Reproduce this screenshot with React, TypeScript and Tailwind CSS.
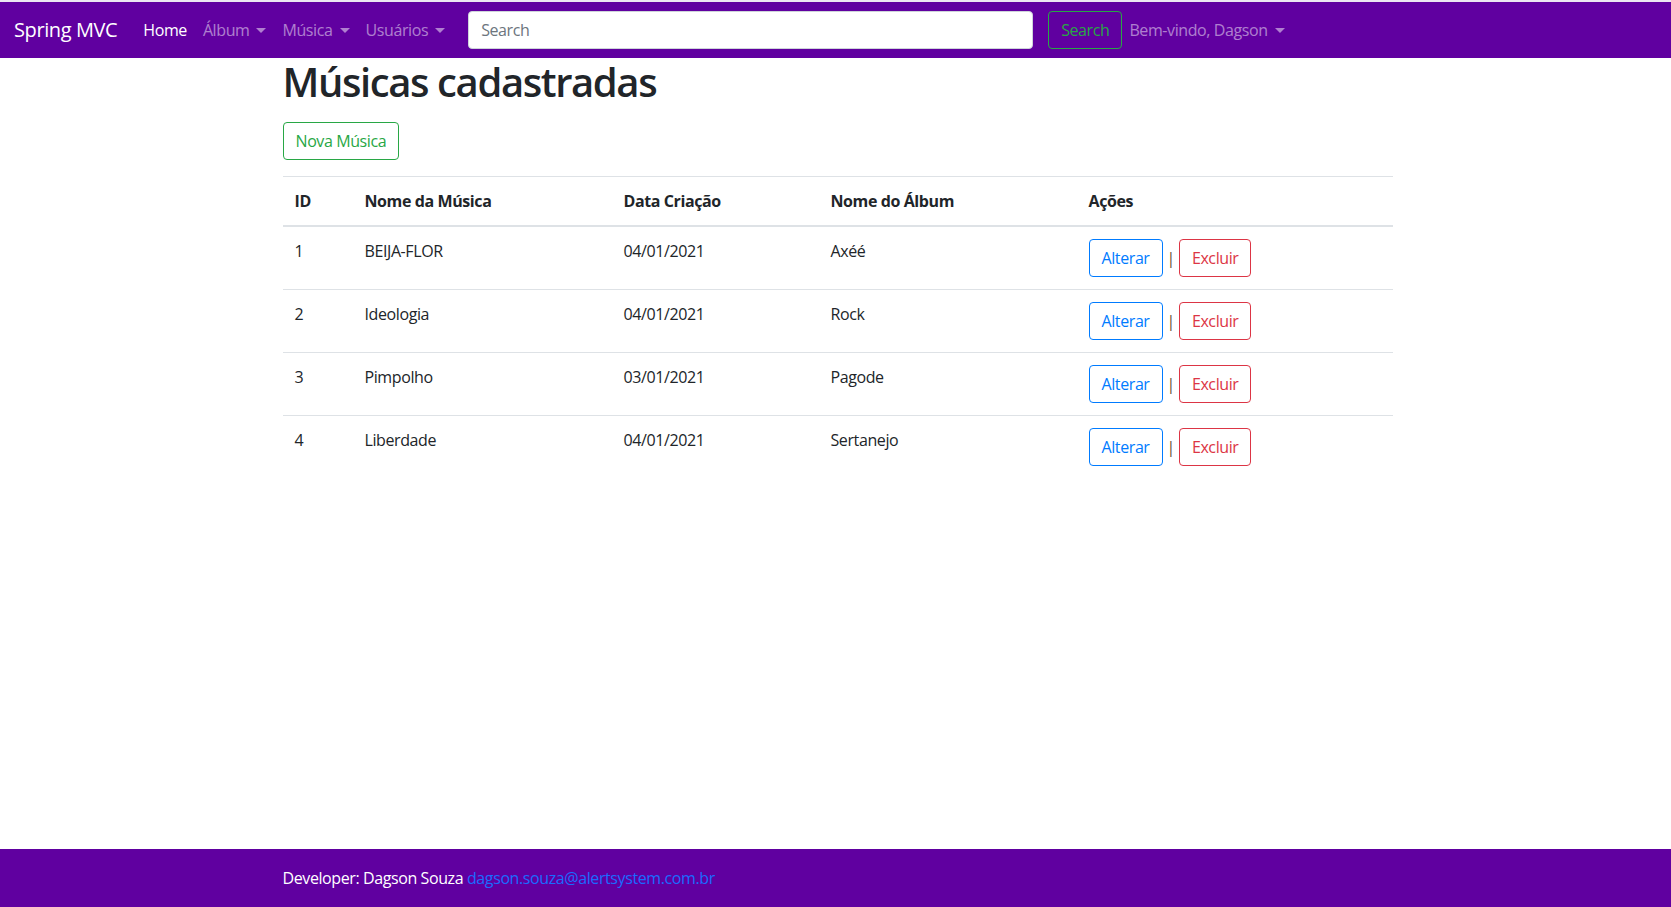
import React from "react";

function Caret() {
  return (
    <span className="inline-block ml-[7px] w-0 h-0 border-t-[5px] border-t-current border-x-[5px] border-x-transparent border-b-0 align-middle" />
  );
}

const rows = [
  { id: 1, nome: "BEIJA-FLOR", data: "04/01/2021", album: "Axéé" },
  { id: 2, nome: "Ideologia", data: "04/01/2021", album: "Rock" },
  { id: 3, nome: "Pimpolho", data: "03/01/2021", album: "Pagode" },
  { id: 4, nome: "Liberdade", data: "04/01/2021", album: "Sertanejo" },
];

export default function App() {
  return (
    <div className="min-h-screen flex flex-col bg-white text-[#212529] font-['Open_Sans',sans-serif] text-[16px] leading-[24px] tracking-[-0.025em]">
      <div className="h-[2px] bg-[#ece6f2]" />
      <nav className="h-[56px] bg-[#6000a0] flex items-center pl-[14px] pr-4">
        <a className="text-[20px] leading-[30px] text-white mr-[18px] whitespace-nowrap">Spring MVC</a>
        <ul className="flex items-center">
          <li>
            <a className="block px-2 py-2 text-white">Home</a>
          </li>
          <li>
            <a className="flex items-center px-2 py-2 text-white/50">
              Álbum
              <Caret />
            </a>
          </li>
          <li>
            <a className="flex items-center px-2 py-2 text-white/50">
              Música
              <Caret />
            </a>
          </li>
          <li>
            <a className="flex items-center px-2 py-2 text-white/50">
              Usuários
              <Caret />
            </a>
          </li>
        </ul>
        <form className="flex items-center ml-[15px]">
          <input
            className="w-[565px] h-[38px] rounded-[4px] bg-white border border-[#ced4da] px-3 text-[16px] tracking-[-0.025em] text-[#495057] placeholder:text-[#6c757d] outline-none"
            placeholder="Search"
          />
          <button
            type="button"
            className="ml-[15px] h-[38px] px-3 border border-[#28a745] text-[#28a745] rounded-[4px] bg-transparent"
          >
            Search
          </button>
        </form>
        <a className="flex items-center pl-[7px] pr-2 py-2 text-white/50">
          Bem-vindo, Dagson
          <Caret />
        </a>
      </nav>

      <main className="mx-auto w-full max-w-[1140px] pl-[17px] pr-[13px]">
        <h1 className="text-[40px] leading-[48px] font-semibold tracking-[-0.035em] mb-4">Músicas cadastradas</h1>
        <button
          type="button"
          className="h-[38px] px-3 border border-[#28a745] text-[#28a745] rounded-[4px] bg-white"
        >
          Nova Música
        </button>
        <table className="mt-4 w-full table-fixed border-collapse">
          <colgroup>
            <col className="w-[70px]" />
            <col className="w-[259px]" />
            <col className="w-[207px]" />
            <col className="w-[258px]" />
            <col />
          </colgroup>
          <thead>
            <tr>
              <th className="text-left font-bold px-3 py-3 border-t border-b-2 border-[#dee2e6]">ID</th>
              <th className="text-left font-bold px-3 py-3 border-t border-b-2 border-[#dee2e6]">Nome da Música</th>
              <th className="text-left font-bold px-3 py-3 border-t border-b-2 border-[#dee2e6]">Data Criação</th>
              <th className="text-left font-bold px-3 py-3 border-t border-b-2 border-[#dee2e6]">Nome do Álbum</th>
              <th className="text-left font-bold px-3 py-3 border-t border-b-2 border-[#dee2e6]">Ações</th>
            </tr>
          </thead>
          <tbody>
            {rows.map((r) => (
              <tr key={r.id}>
                <td className="align-top px-3 py-3 border-t border-[#dee2e6]">{r.id}</td>
                <td className="align-top px-3 py-3 border-t border-[#dee2e6]">{r.nome}</td>
                <td className="align-top px-3 py-3 border-t border-[#dee2e6]">{r.data}</td>
                <td className="align-top px-3 py-3 border-t border-[#dee2e6]">{r.album}</td>
                <td className="align-top px-3 py-3 border-t border-[#dee2e6]">
                  <div className="flex items-center">
                    <button
                      type="button"
                      className="h-[38px] px-3 border border-[#007bff] text-[#007bff] rounded-[4px] bg-white"
                    >
                      Alterar
                    </button>
                    <span className="mx-[4px] text-[#6b5030]">|</span>
                    <button
                      type="button"
                      className="h-[38px] px-3 border border-[#dc3545] text-[#dc3545] rounded-[4px] bg-white"
                    >
                      Excluir
                    </button>
                  </div>
                </td>
              </tr>
            ))}
          </tbody>
        </table>
      </main>

      <footer className="mt-auto h-[58px] bg-[#6000a0] flex items-center">
        <div className="mx-auto w-full max-w-[1140px] pl-[17px] pr-[13px] text-white">
          Developer: Dagson Souza <a className="text-[#1a6bff]">dagson.souza@alertsystem.com.br</a>
        </div>
      </footer>
    </div>
  );
}
